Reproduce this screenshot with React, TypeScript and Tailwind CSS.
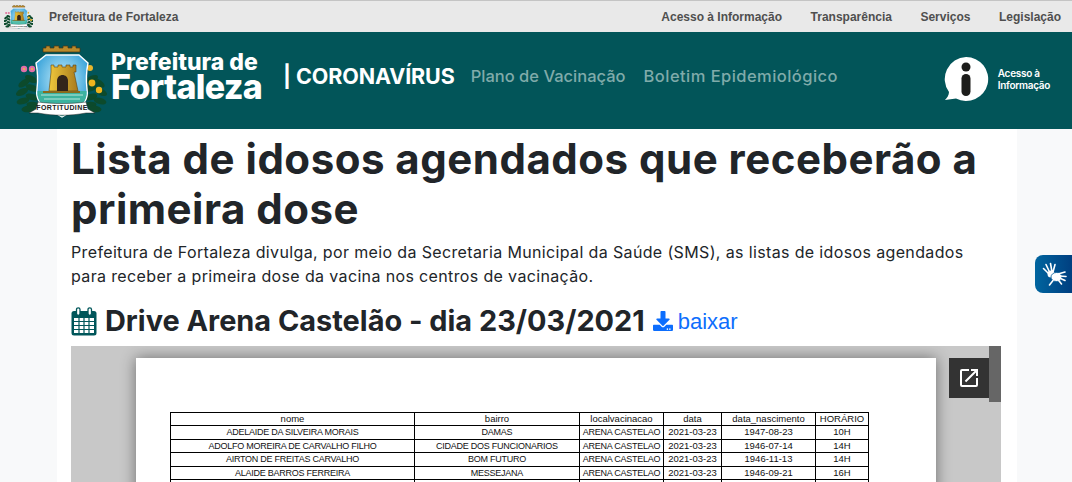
import { FaDownload } from "react-icons/fa";

const sans = "font-['Inter','Noto_Sans',sans-serif]";
const arial = "font-['Liberation_Sans',Arial,sans-serif]";

const rows = [
  ["ADELAIDE DA SILVEIRA MORAIS", "DAMAS", "ARENA CASTELAO", "2021-03-23", "1947-08-23", "10H"],
  ["ADOLFO MOREIRA DE CARVALHO FILHO", "CIDADE DOS FUNCIONARIOS", "ARENA CASTELAO", "2021-03-23", "1946-07-14", "14H"],
  ["AIRTON DE FREITAS CARVALHO", "BOM FUTURO", "ARENA CASTELAO", "2021-03-23", "1946-11-13", "14H"],
  ["ALAIDE BARROS FERREIRA", "MESSEJANA", "ARENA CASTELAO", "2021-03-23", "1946-09-21", "16H"],
  ["ALBERTO TEIXEIRA DAS DORES", "MESSEJANA", "ARENA CASTELAO", "2021-03-23", "1947-11-23", "14H"],
];

// leaves of one laurel branch, mirrored for the right side
const leaves = [
  [21, 40, 25],
  [14, 44, -35],
  [22, 49, 20],
  [12, 53, -25],
  [22, 58, 15],
  [13, 62, -15],
  [23, 66, 5],
  [18, 70, -5],
];

const Crest = ({ className, viewBox }: { className: string; viewBox: string }) => (
  <svg viewBox={viewBox} className={className}>
    <defs>
      <radialGradient id="sky" cx="50%" cy="40%" r="60%">
        <stop offset="0%" stopColor="#c8eefa" />
        <stop offset="100%" stopColor="#2f9ed8" />
      </radialGradient>
      <linearGradient id="stone" x1="0" x2="1" y1="0" y2="0">
        <stop offset="0%" stopColor="#f0c83c" />
        <stop offset="100%" stopColor="#a87a1c" />
      </linearGradient>
    </defs>
    {/* laurels */}
    {leaves.map(([x, y, a]) => (
      <g key={`${x}-${y}`} fill="#0c4a2c">
        <ellipse cx={x} cy={y} rx="6.500" ry="3.200" transform={`rotate(${a} ${x} ${y})`} />
        <ellipse cx={103 - x} cy={y} rx="6.500" ry="3.200" transform={`rotate(${-a} ${103 - x} ${y})`} />
      </g>
    ))}
    <circle cx="14" cy="30" r="3.200" fill="#e06fa8" />
    <circle cx="22" cy="30" r="3.200" fill="#e06fa8" />
    <circle cx="14" cy="30" r="1" fill="#e8c23a" />
    <circle cx="22" cy="30" r="1" fill="#e8c23a" />
    <circle cx="80" cy="29" r="3" fill="#e7b52c" />
    <circle cx="82" cy="44" r="3.400" fill="#f0b51e" />
    <circle cx="89" cy="51" r="3.200" fill="#f0b51e" />
    {/* crown */}
    <path d="M33 13V9h3V7h4v2h4V7h5v2h4V7h5v2h4V7h4v2h4v4z" fill="#b98a2c" stroke="#4a3412" strokeWidth=".7" />
    {/* shield */}
    <path d="M36 16h33l9 8c-2 10-2 18-1 26 2 12-5 18-15 22l-10 6-10-6c-10-4-17-10-15-22 1-8 1-16-1-26z" fill="url(#sky)" stroke="#fff" strokeWidth="1.400" />
    <path d="M27.500 52h49c1 10-6 16-15 20l-9.500 5.500-9.500-5.500c-9-4-16-10-15-20z" fill="#3cb39f" />
    <path d="M31 56h42M34 60h36" stroke="#d8f2ea" strokeWidth=".8" />
    {/* tower */}
    <path d="M41 33v-7h3v2h4v-2h4v2h4v-2h4v2h3v-2h3v7h-2l4 19H39z" fill="url(#stone)" stroke="#5b4214" strokeWidth=".6" />
    <path d="M33 52h37v2H33z" fill="#8a6a1c" />
    <path d="M47 52V42c0-8 11-8 11 0v10z" fill="#33241a" />
    {/* ribbon */}
    <path d="M28 63c15 2 33 2 48 0l2 7 7 4-9 0c-16 3-32 3-48 0l-9 0 7-4z" fill="#fff" stroke="#222" strokeWidth=".5" />
    <text x="52" y="71" textAnchor="middle" fontSize="7" fontWeight="700" fill="#222" letterSpacing=".4" fontFamily="'Liberation Sans',sans-serif">FORTITUDINE</text>
  </svg>
);

const HandsIcon = () => (
  <svg viewBox="0 0 26 26" className="h-[26px] w-[26px]" stroke="#fff" fill="#fff" strokeLinecap="round">
    <circle cx="10" cy="13" r="3.500" stroke="none" />
    <path d="M9 12L5 3.500M11 11L9.500 2.500M12 11l2-7.500M8 13L2.500 7.500" strokeWidth="1.600" fill="none" />
    <ellipse cx="15.500" cy="16" rx="5.500" ry="4.500" stroke="#005a98" strokeWidth=".8" />
    <path d="M17 13l7-2M18.500 15l6.500.5M18.500 17l5.500 2.500M17 18.500l3.500 4.500M12 19.500L8.500 24" strokeWidth="1.600" fill="none" />
  </svg>
);

export default function App() {
  return (
    <div className={`relative h-[482px] w-full overflow-hidden bg-[#f8f9fa] ${sans}`}>
      <div className={`flex h-8 items-center justify-between border-t border-[#c4c4c4] bg-[#e9e9e9] pl-[4px] pr-[11px] text-[12px] font-bold text-[#4f4f4f] ${arial}`}>
        <div className="flex items-center gap-[16px]">
          <Crest viewBox="8 6 86 72" className="h-[24px] w-[29px]" />
          <span>Prefeitura de Fortaleza</span>
        </div>
        <nav className="flex gap-[28.500px]">
          <span>Acesso à Informação</span>
          <span>Transparência</span>
          <span>Serviços</span>
          <span>Legislação</span>
        </nav>
      </div>

      <header className="flex h-[97px] items-center justify-between bg-[#025559] pl-[10px] pr-[22px] text-white">
        <div className="flex items-center">
          <Crest viewBox="0 0 100 84" className="h-[84px] w-[100px]" />
          <div className="mb-[12px] ml-[1px] mr-[22px] flex w-[150px] flex-col font-extrabold">
            <span className="whitespace-nowrap text-[23px] leading-[24px]">Prefeitura de</span>
            <span className="text-[34px] leading-[26px] tracking-[-0.7px]">Fortaleza</span>
          </div>
          <div className="mb-[8px] flex items-center">
            <span className="mr-[16px] text-[21.500px] font-bold tracking-[-0.1px]">| CORONAVÍRUS</span>
            <span className="mr-[18px] text-[16.500px] font-medium text-[#80abaa]">Plano de Vacinação</span>
            <span className="text-[16.500px] font-medium tracking-[0.45px] text-[#80abaa]">Boletim Epidemiológico</span>
          </div>
        </div>
        <div className="mb-[3px] flex items-center gap-[9px]">
          <svg viewBox="0 0 46 46" className="h-[46px] w-[46px]">
            <path d="M23 1a22 22 0 1 1-10 41.500L2 44c2-2 4-5 4-8A22 22 0 0 1 23 1z" fill="#fff" />
            <circle cx="23" cy="11" r="4.500" fill="#1d1d1b" />
            <rect x="18.500" y="18" width="9" height="22" rx="4.500" fill="#1d1d1b" />
          </svg>
          <div className="text-[10px] font-semibold leading-[12px] tracking-[-0.3px]">
            Acesso à
            <br />
            Informação
          </div>
        </div>
      </header>

      <main className="ml-[57px] w-[960px] bg-white px-[14px] pt-[5px]">
        <h1 className="text-[42px] font-bold leading-[50px] tracking-[0.5px] text-[#212529]">
          Lista de idosos agendados que receberão a primeira dose
        </h1>
        <p className="mt-[6px] max-w-[900px] text-[16px] leading-[24px] tracking-[0.36px] text-[#212529]">
          Prefeitura de Fortaleza divulga, por meio da Secretaria Municipal da Saúde (SMS), as listas de idosos agendados para receber a primeira dose da vacina nos centros de vacinação.
        </p>
        <h2 className="mt-[14px] flex h-[38px] items-center text-[28.900px] font-bold text-[#212529]">
          <svg viewBox="0 0 26 29" className="mr-[8px] h-[29px] w-[26px]">
            <rect x=".5" y="4" width="25" height="24.500" rx="2.500" fill="#00565a" />
            <rect x="3" y="11" width="20" height="15" fill="#fff" />
            <path d="M3 14.500h20M3 18.500h20M3 22.500h20M8 11v15M13 11v15M18 11v15" stroke="#00565a" strokeWidth="1.200" />
            <rect x="5.500" y=".8" width="3.500" height="7.500" rx="1.700" fill="#fff" stroke="#00565a" strokeWidth="1.300" />
            <rect x="17" y=".8" width="3.500" height="7.500" rx="1.700" fill="#fff" stroke="#00565a" strokeWidth="1.300" />
          </svg>
          Drive Arena Castelão - dia 23/03/2021
          <a className={`ml-[8px] flex items-center gap-[5px] text-[22px] font-normal text-[#0d6efd] ${arial}`}>
            <FaDownload size={20} />
            baixar
          </a>
        </h2>

        <div className="relative mt-[6px] h-[200px] w-[930px] overflow-hidden bg-[#c8c8c8] pl-[65px] pt-[12px]">
          <div className="h-[300px] w-[800px] bg-white pl-[34px] pt-[54px] shadow-[0_0_14px_rgba(0,0,0,0.45)]">
            <table className={`w-[698px] table-fixed border-collapse border border-black text-center text-[9.500px] leading-[12.400px] text-[#111] ${arial}`}>
              <colgroup>
                <col className="w-[244px]" />
                <col className="w-[165px]" />
                <col className="w-[84px]" />
                <col className="w-[58px]" />
                <col className="w-[94px]" />
                <col className="w-[53px]" />
              </colgroup>
              <thead>
                <tr>
                  {["nome", "bairro", "localvacinacao", "data", "data_nascimento", "HORÁRIO"].map((h) => (
                    <th key={h} className="overflow-hidden whitespace-nowrap border border-black font-normal">{h}</th>
                  ))}
                </tr>
              </thead>
              <tbody>
                {rows.map((r) => (
                  <tr key={r[0]}>
                    {r.map((c, i) => (
                      <td key={i} className={i < 3 ? "overflow-hidden whitespace-nowrap border border-black text-[9px] tracking-[-0.25px]" : "overflow-hidden whitespace-nowrap border border-black"}>{c}</td>
                    ))}
                  </tr>
                ))}
              </tbody>
            </table>
          </div>
          <button className="absolute right-[12px] top-[12px] flex h-[40px] w-[40px] items-center justify-center bg-[#333] text-white">
            <svg viewBox="0 0 24 24" className="h-[24px] w-[24px]" fill="currentColor">
              <path d="M19 19H5V5h7V3H5a2 2 0 0 0-2 2v14a2 2 0 0 0 2 2h14a2 2 0 0 0 2-2v-7h-2v7zM14 3v2h3.590l-9.830 9.830 1.410 1.410L19 6.410V10h2V3h-7z" />
            </svg>
          </button>
          <div className="absolute right-0 top-0 h-[56px] w-[12px] bg-[#666]" />
        </div>
      </main>

      <div className="absolute left-[1035px] top-[255px] flex h-[38px] w-[37px] items-center justify-center rounded-l-[8px] bg-gradient-to-r from-[#00659f] to-[#003f80]">
        <HandsIcon />
      </div>
    </div>
  );
}
